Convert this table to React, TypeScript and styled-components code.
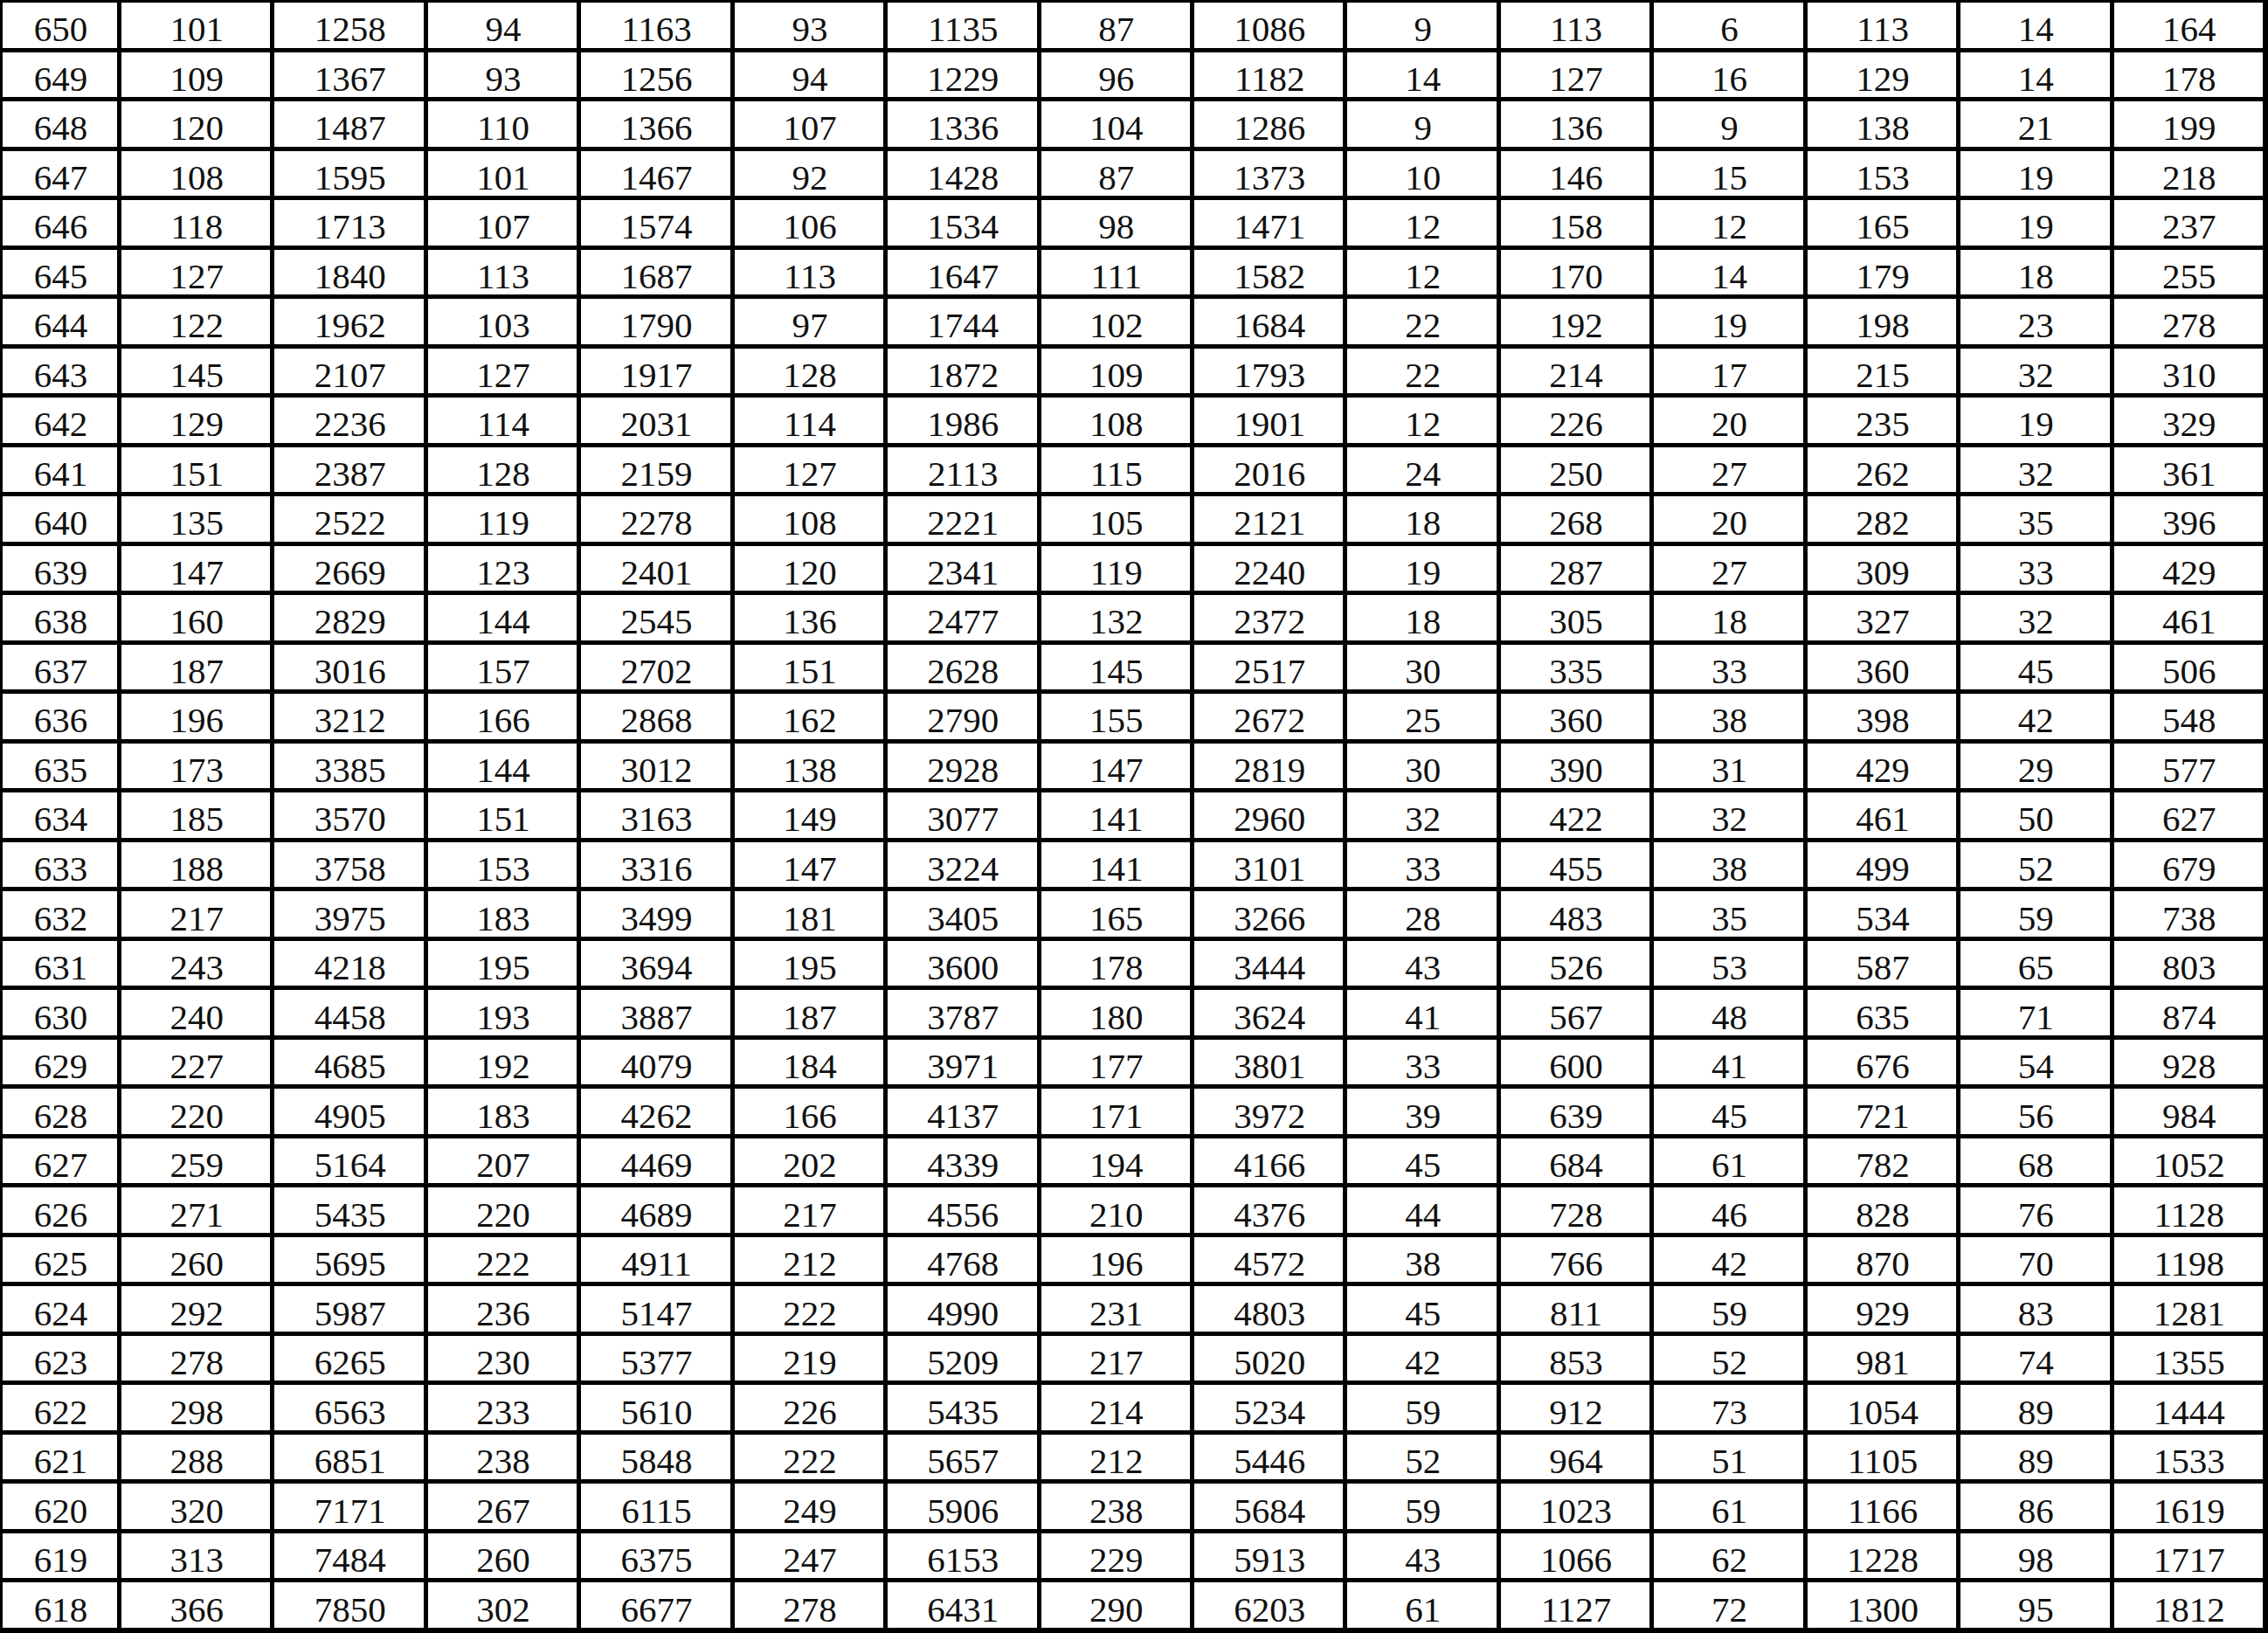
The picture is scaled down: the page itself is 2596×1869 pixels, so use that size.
import React from "react";
import styled, { createGlobalStyle } from "styled-components";

const GlobalStyle = createGlobalStyle`
  html, body {
    margin: 0;
    padding: 0;
    background: #ffffff;
  }
`;

const Sheet = styled.div`
  width: 2596px;
  height: 1869px;
  box-sizing: border-box;
  display: grid;
  grid-template-columns: 131px repeat(14, 1fr);
  grid-auto-rows: 1fr;
  gap: 5px;
  padding: 3px 6px 6px 3px;
  background: #000000;
`;

const Cell = styled.div`
  background: #ffffff;
  display: flex;
  align-items: center;
  justify-content: center;
  padding-top: 10px;
  padding-left: 2px;
  box-sizing: border-box;
  font-family: "Liberation Serif", "Times New Roman", serif;
  font-size: 41px;
  color: #111111;
  line-height: 1;
`;

// each line: wavelength, then 14 values
const raw = `650 101 1258 94 1163 93 1135 87 1086 9 113 6 113 14 164
649 109 1367 93 1256 94 1229 96 1182 14 127 16 129 14 178
648 120 1487 110 1366 107 1336 104 1286 9 136 9 138 21 199
647 108 1595 101 1467 92 1428 87 1373 10 146 15 153 19 218
646 118 1713 107 1574 106 1534 98 1471 12 158 12 165 19 237
645 127 1840 113 1687 113 1647 111 1582 12 170 14 179 18 255
644 122 1962 103 1790 97 1744 102 1684 22 192 19 198 23 278
643 145 2107 127 1917 128 1872 109 1793 22 214 17 215 32 310
642 129 2236 114 2031 114 1986 108 1901 12 226 20 235 19 329
641 151 2387 128 2159 127 2113 115 2016 24 250 27 262 32 361
640 135 2522 119 2278 108 2221 105 2121 18 268 20 282 35 396
639 147 2669 123 2401 120 2341 119 2240 19 287 27 309 33 429
638 160 2829 144 2545 136 2477 132 2372 18 305 18 327 32 461
637 187 3016 157 2702 151 2628 145 2517 30 335 33 360 45 506
636 196 3212 166 2868 162 2790 155 2672 25 360 38 398 42 548
635 173 3385 144 3012 138 2928 147 2819 30 390 31 429 29 577
634 185 3570 151 3163 149 3077 141 2960 32 422 32 461 50 627
633 188 3758 153 3316 147 3224 141 3101 33 455 38 499 52 679
632 217 3975 183 3499 181 3405 165 3266 28 483 35 534 59 738
631 243 4218 195 3694 195 3600 178 3444 43 526 53 587 65 803
630 240 4458 193 3887 187 3787 180 3624 41 567 48 635 71 874
629 227 4685 192 4079 184 3971 177 3801 33 600 41 676 54 928
628 220 4905 183 4262 166 4137 171 3972 39 639 45 721 56 984
627 259 5164 207 4469 202 4339 194 4166 45 684 61 782 68 1052
626 271 5435 220 4689 217 4556 210 4376 44 728 46 828 76 1128
625 260 5695 222 4911 212 4768 196 4572 38 766 42 870 70 1198
624 292 5987 236 5147 222 4990 231 4803 45 811 59 929 83 1281
623 278 6265 230 5377 219 5209 217 5020 42 853 52 981 74 1355
622 298 6563 233 5610 226 5435 214 5234 59 912 73 1054 89 1444
621 288 6851 238 5848 222 5657 212 5446 52 964 51 1105 89 1533
620 320 7171 267 6115 249 5906 238 5684 59 1023 61 1166 86 1619
619 313 7484 260 6375 247 6153 229 5913 43 1066 62 1228 98 1717
618 366 7850 302 6677 278 6431 290 6203 61 1127 72 1300 95 1812`;

const rows = raw.split("\n").map((line) => line.trim().split(/\s+/));

const App: React.FC = () => {
  return (
    <>
      <GlobalStyle />
      <Sheet>
        {rows.map((row, r) =>
          row.map((value, c) => <Cell key={`${r}-${c}`}>{value}</Cell>)
        )}
      </Sheet>
    </>
  );
};

export default App;
